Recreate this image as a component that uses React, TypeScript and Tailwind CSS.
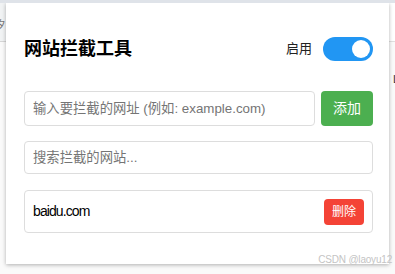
import React from "react";

export default function App() {
  const font = { fontFamily: '"Liberation Sans", Arial, "Noto Sans CJK SC", sans-serif' };
  return (
    <div
      className="relative w-[395px] h-[274px] overflow-hidden bg-[#fafafa] border-t-[3px] border-[#dfe3e9]"
      style={font}
    >
      {/* page behind the popup */}
      <div className="absolute left-0 top-0 w-[6px] h-[39px] bg-[#f1f3f4] border-b border-[#d6d6d6]">
        <span className="absolute left-[-6px] top-[14px] text-[11px] text-[#777]">汐</span>
      </div>
      <div className="absolute right-0 top-0 w-[6px] h-[39px] bg-[#ffffff] border-b border-[#e0e0e0]" />
      <span className="absolute right-[-4px] top-[68px] text-[11px] text-[#333]">L</span>

      <div className="relative ml-[6px] w-[383px] h-[261px] bg-white shadow-[0_1px_4px_rgba(0,0,0,0.3)] pl-[18px] pr-[16px] pt-[34px]">
        <div className="flex items-center justify-between h-[24px]">
          <h1 className="text-[18px] font-bold text-black leading-none">网站拦截工具</h1>
          <div className="flex items-center gap-[11px]">
            <span className="text-[13px] text-[#222]">启用</span>
            <div className="w-[50px] h-[24px] rounded-full bg-[#2196f3] flex items-center justify-end pr-[3px]">
              <div className="w-[18px] h-[18px] rounded-full bg-white" />
            </div>
          </div>
        </div>

        <div className="flex gap-[6px] mt-[30px] h-[35px]">
          <input
            className="flex-1 min-w-0 border border-[#dddddd] rounded-[4px] px-[8px] text-[13.33px] outline-none placeholder:text-[#757575]"
            placeholder="输入要拦截的网址 (例如: example.com)"
            style={font}
          />
          <button className="w-[52px] rounded-[4px] bg-[#4caf50] text-white text-[14px]" style={font}>
            添加
          </button>
        </div>

        <input
          className="mt-[15px] w-full h-[33px] border border-[#dddddd] rounded-[4px] px-[8px] text-[13.33px] outline-none placeholder:text-[#757575]"
          placeholder="搜索拦截的网站..."
          style={font}
        />

        <div className="mt-[16px] flex items-center justify-between h-[43px] border border-[#dddddd] rounded-[4px] pl-[8px] pr-[8px]">
          <span className="text-[14px] tracking-[-0.9px] text-black">baidu.com</span>
          <button className="w-[40px] h-[26px] rounded-[4px] bg-[#f44336] text-white text-[12px]" style={font}>
            删除
          </button>
        </div>
      </div>

      <span className="absolute right-[3px] bottom-[9px] text-[10px] tracking-[-0.2px] leading-none text-[#c4c4c4]">CSDN @laoyu12</span>
    </div>
  );
}
